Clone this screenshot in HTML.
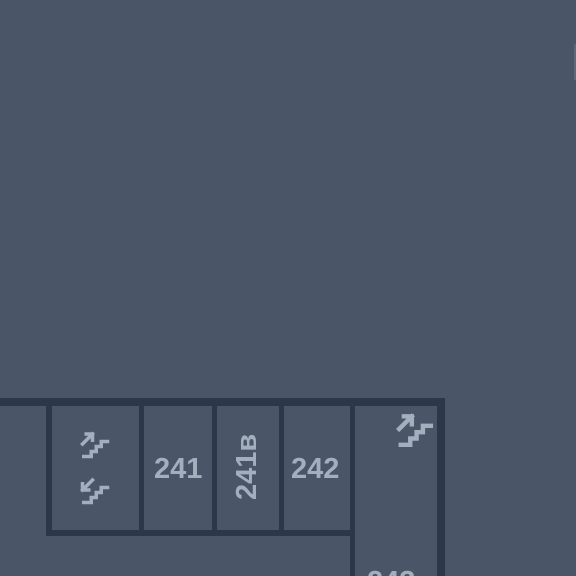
<!DOCTYPE html>
<html style="overflow:hidden;width:576px;height:576px"><head><style>
body{margin:0;width:576px;height:576px;background:#4a5568;position:relative;overflow:hidden;font-family:"Liberation Sans",sans-serif}
.w{position:absolute;background:#2d3748}
.t{position:absolute;color:#a5aebd;font-weight:bold;font-size:29px;line-height:1}
svg{position:absolute}
</style></head><body>
<div class="w" style="left:0;top:398px;width:445px;height:8px"></div>
<div class="w" style="left:437px;top:398px;width:8px;height:178px"></div>
<div class="w" style="left:46px;top:398px;width:6px;height:138px"></div>
<div class="w" style="left:46px;top:530px;width:309px;height:6px"></div>
<div class="w" style="left:139px;top:398px;width:5px;height:138px"></div>
<div class="w" style="left:212px;top:398px;width:5px;height:138px"></div>
<div class="w" style="left:279px;top:398px;width:5px;height:138px"></div>
<div class="w" style="left:350px;top:398px;width:5px;height:178px"></div>
<div class="t" style="left:154px;top:455px">241</div>
<div class="t" style="left:291px;top:455px">242</div>
<div class="t" style="left:367px;top:568px">243</div>
<div class="t" style="left:233px;top:500px;transform:rotate(-90deg);transform-origin:0 0;">241в</div>
<svg style="left:396px;top:410px" width="38" height="38" viewBox="0 0 24 24" fill="none" stroke="#a5aebd" stroke-width="2.8" stroke-linecap="square" stroke-linejoin="miter">
<path d="M2 12 L10 4 M5 4 H10 V9"/>
<path d="M3 22 H9 V18 H13 V14 H17 V10 H22"/>
</svg>
<svg style="left:80px;top:429px" width="30" height="30" viewBox="0 0 24 24" fill="none" stroke="#a5aebd" stroke-width="2.8" stroke-linecap="square">
<path d="M2 12 L10 4 M5 4 H10 V9"/>
<path d="M3 22 H9 V18 H13 V14 H17 V10 H22"/>
</svg>
<svg style="left:80px;top:475px" width="30" height="30" viewBox="0 0 24 24" fill="none" stroke="#a5aebd" stroke-width="2.8" stroke-linecap="square">
<path d="M10 4 L2 12 M2 7 V12 H7"/>
<path d="M3 22 H9 V18 H13 V14 H17 V10 H22"/>
</svg>
<div style="position:absolute;left:574px;top:44px;width:2px;height:36px;background:#5e687a"></div>
</body></html>
